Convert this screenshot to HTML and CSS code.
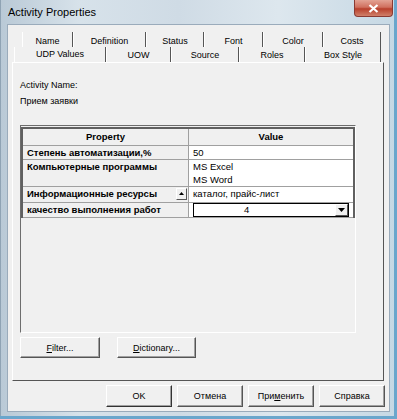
FILE: index.html
```html
<!DOCTYPE html>
<html lang="ru">
<head>
  <meta charset="UTF-8" />
  <title>Activity Properties</title>
  <link rel="stylesheet" href="styles.css">
</head>
<body>
  <div class="window">
    <div class="titlebar">
      <span class="title">Activity Properties</span>
      <span class="close">
        <svg width="11" height="9" viewBox="0 0 11 9"><path d="M1.5 1 L9.5 8 M9.5 1 L1.5 8" stroke="#fff" stroke-width="2.2"/></svg>
      </span>
    </div>

    <div class="client">
      <div class="tabs">
        <div class="tab-row back">
          <div class="tab">Name</div>
          <div class="tab">Definition</div>
          <div class="tab">Status</div>
          <div class="tab">Font</div>
          <div class="tab">Color</div>
          <div class="tab">Costs</div>
        </div>
        <div class="tab-row front">
          <div class="tab active">UDP Values</div>
          <div class="tab">UOW</div>
          <div class="tab">Source</div>
          <div class="tab">Roles</div>
          <div class="tab">Box Style</div>
        </div>
      </div>

      <div class="page">
        <div class="field-label">Activity Name:</div>
        <div class="field-value">Прием заявки</div>

        <div class="grid-box">
          <table class="props">
            <tr class="head">
              <th class="col-prop">Property</th>
              <th class="col-val">Value</th>
            </tr>
            <tr class="r1">
              <td class="prop">Степень автоматизации,%</td>
              <td class="val">50</td>
            </tr>
            <tr class="r2">
              <td class="prop">Компьютерные программы</td>
              <td class="val">MS Excel<br>MS Word</td>
            </tr>
            <tr class="r3">
              <td class="prop">
                <div class="prop-inner">
                  <span>Информационные ресурсы</span>
                  <span class="mini-btn">
                    <svg width="5" height="3" viewBox="0 0 5 3"><path d="M0 3 L2.5 0 L5 3 Z" fill="#000"/></svg>
                  </span>
                </div>
              </td>
              <td class="val">каталог, прайс-лист</td>
            </tr>
            <tr class="r4">
              <td class="prop">качество выполнения работ</td>
              <td class="val combo-cell">
                <div class="combo">
                  <span class="combo-text">4</span>
                  <span class="combo-arrow">
                    <svg width="7" height="4" viewBox="0 0 7 4"><path d="M0 0 L7 0 L3.5 4 Z" fill="#000"/></svg>
                  </span>
                </div>
              </td>
            </tr>
          </table>
        </div>

        <div class="page-buttons">
          <button class="btn btn-filter"><u>F</u>ilter...</button>
          <button class="btn btn-dict"><u>D</u>ictionary...</button>
        </div>
      </div>

      <div class="dialog-buttons">
        <button class="btn dlg default">OK</button>
        <button class="btn dlg">Отмена</button>
        <button class="btn dlg">При<u>м</u>енить</button>
        <button class="btn dlg">Справка</button>
      </div>
    </div>
  </div>
</body>
</html>
```

FILE: styles.css
```css
/* Dialog frame */
body {
  margin: 0;
  width: 397px;
  height: 419px;
  overflow: hidden;
  font-family: 'Liberation Sans', Arial, sans-serif;
  font-size: 9px;
  color: #000;
}

.window {
  width: 397px;
  height: 419px;
  box-sizing: border-box;
  padding: 0 7px 7px 7px;
  display: flex;
  flex-direction: column;
  background: linear-gradient(to right, #b9c9d6 0%, #d7e2ea 20%, #cfdbe5 45%, #dde7ee 70%, #c6d8e4 100%);
  box-shadow: inset -3px 0 #6aa6cc, inset 0 -3px #6aa6cc, inset 1px 0 #8fa3b4;
}

.titlebar {
  height: 24px;
  display: flex;
  align-items: flex-start;
}

.title {
  margin: 5px 0 0 1px;
  font-size: 11px;
  line-height: 14px;
}

.close {
  margin-left: auto;
  margin-right: -3px;
  width: 39px;
  height: 17px;
  box-sizing: border-box;
  border: 1px solid #8a3a32;
  border-top: none;
  border-radius: 0 0 4px 4px;
  background: linear-gradient(to bottom, #e3a394 0%, #d0705e 45%, #b8402c 55%, #d0806a 100%);
  display: flex;
  align-items: center;
  justify-content: center;
}

.client {
  flex: 1;
  background: #f0f0f0;
  border: 1px solid #9aabbb;
  display: flex;
  flex-direction: column;
}

/* Tabs */
.tabs {
  margin-top: 7px;
}

.tab-row {
  display: flex;
  height: 15px;
}

.tab-row.back {
  margin-left: 14px;
}

.tab-row.front {
  margin-left: 6px;
}

.tab {
  box-sizing: border-box;
  height: 15px;
  text-align: center;
  border-right: 1px solid #555;
  border-left: 1px solid #fff;
}

.back .tab {
  line-height: 18px;
}

.front .tab {
  line-height: 16px;
}

.back .tab:nth-child(1) { width: 51px; }
.back .tab:nth-child(2) { width: 73px; }
.back .tab:nth-child(3) { width: 58px; }
.back .tab:nth-child(4) { width: 59px; }
.back .tab:nth-child(5) { width: 60px; }
.back .tab:nth-child(6) { width: 58px; }

.front .tab:nth-child(1) { width: 92px; }
.front .tab:nth-child(2) { width: 65px; }
.front .tab:nth-child(3) { width: 68px; }
.front .tab:nth-child(4) { width: 66px; }
.front .tab:nth-child(5) { width: 76px; }

.tab.active {
  line-height: 14px;
}

/* Tab page */
.page {
  margin-left: 4px;
  width: 372px;
  height: 319px;
  box-sizing: border-box;
  border: 1px solid;
  border-color: #fff #555 #555 #fff;
  padding: 14px 0 0 7px;
}

.field-label,
.field-value {
  line-height: 16px;
}

.grid-box {
  margin-top: 16px;
  width: 336px;
  height: 208px;
  box-sizing: border-box;
  border: 1px solid;
  border-color: #6d6d6d #fff #fff #6d6d6d;
  padding-top: 1px;
}

.props {
  width: 334px;
  border-collapse: collapse;
  border: 2px solid #606060;
  border-bottom: none;
  table-layout: fixed;
}

.props th,
.props td {
  border: 1px solid #a0a0a0;
  padding: 0 4px;
  vertical-align: top;
  font-size: 9.5px;
}

.props th {
  font-weight: bold;
  text-align: center;
  height: 16px;
  line-height: 16px;
  background: #f0f0f0;
}

.col-prop {
  width: 157px;
}

.prop {
  font-weight: bold;
  background: #f0f0f0;
  line-height: 13px;
}

.val {
  background: #fff;
  line-height: 13px;
}

.r2 td {
  height: 26px;
}

.r3 td {
  height: 15px;
}

.prop-inner {
  display: flex;
  justify-content: space-between;
  align-items: center;
}

.mini-btn {
  width: 11px;
  height: 12px;
  box-sizing: border-box;
  margin-right: -3px;
  border: 1px solid;
  border-color: #fff #555 #555 #fff;
  display: flex;
  align-items: center;
  justify-content: center;
}

.combo-cell {
  padding: 0;
}

.combo {
  display: flex;
  height: 14px;
  box-sizing: border-box;
  border: 1px solid #000;
  background: #fff;
}

.combo-text {
  flex: 1;
  padding-left: 50px;
  line-height: 12px;
}

.combo-arrow {
  width: 13px;
  box-sizing: border-box;
  border: 1px solid;
  border-color: #fff #555 #555 #fff;
  background: #f0f0f0;
  display: flex;
  align-items: center;
  justify-content: center;
}

/* Buttons */
.btn {
  font-family: 'Liberation Sans', Arial, sans-serif;
  font-size: 9px;
  height: 21px;
  padding: 0;
  background: #f0f0f0;
  border: 1px solid;
  border-color: #fff #555 #555 #fff;
  box-shadow: inset -1px -1px #a0a0a0;
  color: #000;
}

.page-buttons {
  display: flex;
  gap: 17px;
  margin-top: 4px;
}

.btn-filter {
  width: 80px;
}

.btn-dict {
  width: 79px;
}

.dialog-buttons {
  display: flex;
  justify-content: flex-end;
  gap: 5px;
  margin: 4px 4px 0 0;
}

.dlg {
  width: 66px;
  height: 22px;
}

.dlg.default {
  border-color: #fff #333 #333 #fff;
}
```
